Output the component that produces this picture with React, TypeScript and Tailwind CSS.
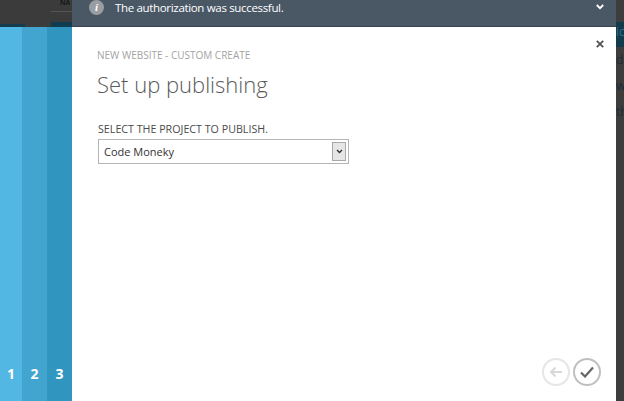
const segoe = { fontFamily: '"Open Sans", "Liberation Sans", sans-serif' };

function Step({ n, className }: { n: number; className: string }) {
  return (
    <div className={`flex h-full items-end justify-center pb-[17px] ${className}`}>
      <span className="text-[14px] leading-[20px] font-bold text-white">{n}</span>
    </div>
  );
}

export default function App() {
  return (
    <div className="relative flex h-[401px] w-[624px] overflow-hidden bg-[#3d3d3d]" style={segoe}>
      {/* left part: dimmed page, then the steps */}
      <div className="flex w-[72px] shrink-0 flex-col">
        <div className="relative h-[27px] bg-[#3b3b3b]">
          <div className="absolute left-0 top-[24px] h-[3px] w-[25px] bg-[#143c4e]" />
          <div className="absolute left-[51px] top-[22px] h-[5px] w-[21px] bg-[#0f3c50]" />
          <div className="absolute left-[51px] top-[11px] h-px w-[21px] bg-[#555555]" />
          <span className="absolute left-[60px] top-0 text-[7px] leading-[5px] font-semibold text-[#111111]">NA</span>
        </div>
        <div className="flex flex-1">
          <Step n={1} className="w-[22px] bg-[#52b8e3]" />
          <Step n={2} className="w-[25px] bg-[#41a5d0]" />
          <Step n={3} className="w-[25px] bg-[#3096bf]" />
        </div>
      </div>

      <div className="flex w-[544px] shrink-0 flex-col">
        {/* notification bar */}
        <div className="flex h-[27px] items-start border-b border-[#3a4550] bg-[#4a5866] pl-[17px] pr-[12px]">
          <span className="flex h-[15px] w-[15px] items-center justify-center rounded-full bg-[#9a9ea3]">
            <span className="text-[11px] leading-none font-bold italic text-white" style={{ fontFamily: '"Liberation Serif", serif' }}>i</span>
          </span>
          <span className="ml-[11px] text-[11.5px] leading-[15px] tracking-[-0.33px] text-white">The authorization was successful.</span>
          <svg className="ml-auto mt-[4px]" width="8" height="6" viewBox="0 0 8 6" fill="none">
            <path d="M0.8 1 L4 4.2 L7.2 1" stroke="#ffffff" strokeWidth="1.8" />
          </svg>
        </div>

        {/* dialog */}
        <div className="relative flex-1 bg-white pl-[25px] pt-[21px]">
          <svg className="absolute right-[12px] top-[13px]" width="8" height="8" viewBox="0 0 8 8" fill="none">
            <path d="M0.8 0.8 L7.2 7.2 M7.2 0.8 L0.8 7.2" stroke="#555555" strokeWidth="1.9" />
          </svg>
          <div className="text-[10px] leading-[14px] text-[#a3a3a3]">NEW WEBSITE - CUSTOM CREATE</div>
          <h1 className="mt-[7px] text-[22px] leading-[30px] font-light text-[#5a5a5a]">Set up publishing</h1>
          <div className="ml-px mt-[24px] text-[10.7px] leading-[12px] text-[#4a4a4a]">SELECT THE PROJECT TO PUBLISH.</div>
          <div className="ml-px mt-[4px] flex h-[25px] w-[251px] items-center justify-between border border-[#b5b5b5] pl-[5px] pr-[2px]">
            <span className="pt-px text-[11px] text-[#333333]">Code Moneky</span>
            <span className="flex h-[19px] w-[14px] items-center justify-center border border-[#a8a8a8] bg-[#e6e6e6]">
              <svg width="7" height="5" viewBox="0 0 7 5" fill="none">
                <path d="M1 1 L3.5 3.5 L6 1" stroke="#333333" strokeWidth="1.4" />
              </svg>
            </span>
          </div>

          {/* nav buttons */}
          <div className="absolute bottom-[15px] right-[15px] flex gap-[3px]">
            <span className="flex h-[28px] w-[28px] items-center justify-center rounded-full border-2 border-[#e6e6e6]">
              <svg width="14" height="12" viewBox="0 0 14 12" fill="none">
                <path d="M13 6 H2 M6.5 1.5 L2 6 L6.5 10.5" stroke="#d8d8d8" strokeWidth="2" />
              </svg>
            </span>
            <span className="flex h-[28px] w-[28px] items-center justify-center rounded-full border-2 border-[#c0c0c0]">
              <svg width="14" height="12" viewBox="0 0 14 12" fill="none">
                <path d="M1 6.5 L5 10.5 L13 1.5" stroke="#666666" strokeWidth="2.2" />
              </svg>
            </span>
          </div>
        </div>
      </div>

      {/* dimmed page at the right edge */}
      <div className="flex min-w-0 flex-1 flex-col pt-[22px] text-[12px] text-[#1e2c36]">
        <div className="h-[25px] bg-[#123c4c] pt-[3px] leading-[14px] text-[#2f6f88]">ic</div>
        <div className="mt-[6px] leading-[14px]">de</div>
        <div className="mt-[12px] leading-[14px]">w</div>
        <div className="mt-[12px] leading-[14px]">th</div>
      </div>
    </div>
  );
}
